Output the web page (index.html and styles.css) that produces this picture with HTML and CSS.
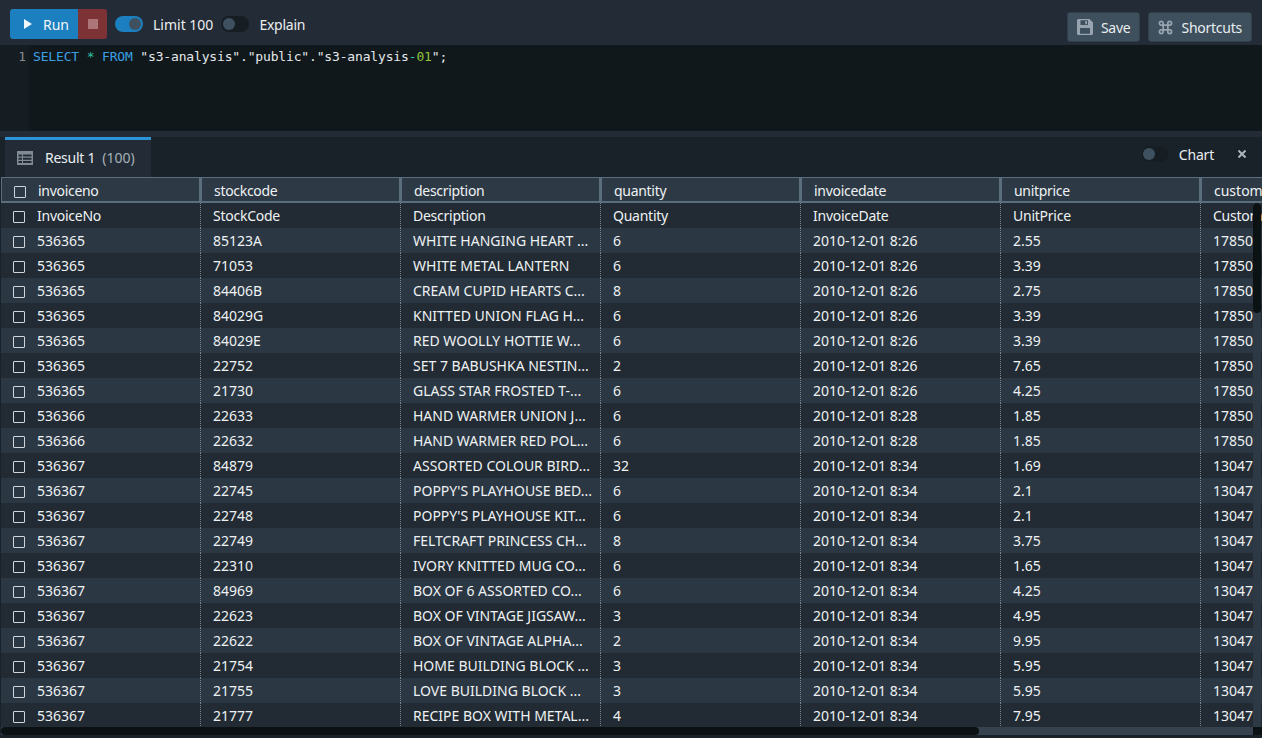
FILE: index.html
```html
<!DOCTYPE html>
<html lang="en">
<head>
<meta charset="utf-8">
<title>Query editor</title>
<link rel="stylesheet" href="styles.css">
</head>
<body>
<div class="app">
  <header class="toolbar">
    <div class="run-group">
      <button class="btn-run"><svg class="ico-play" viewBox="0 0 8 10"><path d="M0 0 8 5 0 10z"/></svg><span>Run</span></button>
      <button class="btn-stop"><span class="stop-square"></span></button>
    </div>
    <span class="toggle on"><span class="knob"></span></span>
    <span class="toggle-label">Limit 100</span>
    <span class="toggle"><span class="knob"></span></span>
    <span class="toggle-label tight">Explain</span>
    <div class="spacer"></div>
    <button class="btn"><svg class="ico" viewBox="0 0 16 16"><path fill-rule="evenodd" d="M0 1.500A1.500 1.500 0 0 1 1.500 0H12.500L16 3.500V14.500A1.500 1.500 0 0 1 14.500 16H1.500A1.500 1.500 0 0 1 0 14.500ZM3.500 1.300V6H11V1.300ZM8.300 2H10V5.300H8.300ZM3 9V14.700H13V9Z"/></svg><span class="tight">Save</span></button>
    <button class="btn"><svg class="ico ico-cmd" viewBox="0 0 16 16"><path fill="none" stroke="currentColor" stroke-width="1.800" d="M5.500 5.500H10.500V10.500H5.500ZM5.500 5.500V3.500A2 2 0 1 0 3.500 5.500H12.500A2 2 0 1 0 10.500 3.500V12.500A2 2 0 1 0 12.500 10.500H3.500A2 2 0 1 0 5.500 12.500V5.500"/></svg><span class="tight">Shortcuts</span></button>
  </header>

  <section class="editor">
    <div class="gutter">1</div>
    <code class="sql"><span class="kw">SELECT</span> <span class="op">*</span> <span class="kw">FROM</span> "s3-analysis"."public"."s3-analysis<span class="op">-</span><span class="num">01</span>";</code>
  </section>

  <div class="divider"></div>

  <section class="results">
    <div class="tabbar">
      <div class="tab">
        <svg class="ico-table" viewBox="0 0 16 14"><path fill-rule="evenodd" d="M0 0H16V14H0ZM1.500 3.500V5.500H5V3.500ZM6 3.500V5.500H14.500V3.500ZM1.500 6.800V8.800H5V6.800ZM6 6.800V8.800H14.500V6.800ZM1.500 10V12H5V10ZM6 10V12H14.500V10Z"/></svg>
        <span class="tight">Result 1</span> <span class="count">(100)</span>
      </div>
      <div class="spacer"></div>
      <span class="toggle chart-toggle"><span class="knob"></span></span>
      <span class="chart-label">Chart</span>
      <svg class="ico-close" viewBox="0 0 8 8"><path d="M.5 .5 7.500 7.500M7.500 .5 .5 7.500"/></svg>
    </div>

    <div class="grid-wrap">
      <div class="grid">
        <div class="row head"><div class="cell"><i class="check"></i>invoiceno</div><div class="cell">stockcode</div><div class="cell">description</div><div class="cell">quantity</div><div class="cell">invoicedate</div><div class="cell">unitprice</div><div class="cell">customerid</div></div>
        <div class="row labels"><div class="cell"><i class="check"></i>InvoiceNo</div><div class="cell">StockCode</div><div class="cell">Description</div><div class="cell">Quantity</div><div class="cell">InvoiceDate</div><div class="cell">UnitPrice</div><div class="cell">CustomerID</div></div>
        <div class="row alt"><div class="cell"><i class="check"></i>536365</div><div class="cell">85123A</div><div class="cell">WHITE HANGING HEART ...</div><div class="cell">6</div><div class="cell">2010-12-01 8:26</div><div class="cell">2.55</div><div class="cell">17850</div></div>
        <div class="row"><div class="cell"><i class="check"></i>536365</div><div class="cell">71053</div><div class="cell">WHITE METAL LANTERN</div><div class="cell">6</div><div class="cell">2010-12-01 8:26</div><div class="cell">3.39</div><div class="cell">17850</div></div>
        <div class="row alt"><div class="cell"><i class="check"></i>536365</div><div class="cell">84406B</div><div class="cell">CREAM CUPID HEARTS C...</div><div class="cell">8</div><div class="cell">2010-12-01 8:26</div><div class="cell">2.75</div><div class="cell">17850</div></div>
        <div class="row"><div class="cell"><i class="check"></i>536365</div><div class="cell">84029G</div><div class="cell">KNITTED UNION FLAG H...</div><div class="cell">6</div><div class="cell">2010-12-01 8:26</div><div class="cell">3.39</div><div class="cell">17850</div></div>
        <div class="row alt"><div class="cell"><i class="check"></i>536365</div><div class="cell">84029E</div><div class="cell">RED WOOLLY HOTTIE W...</div><div class="cell">6</div><div class="cell">2010-12-01 8:26</div><div class="cell">3.39</div><div class="cell">17850</div></div>
        <div class="row"><div class="cell"><i class="check"></i>536365</div><div class="cell">22752</div><div class="cell">SET 7 BABUSHKA NESTIN...</div><div class="cell">2</div><div class="cell">2010-12-01 8:26</div><div class="cell">7.65</div><div class="cell">17850</div></div>
        <div class="row alt"><div class="cell"><i class="check"></i>536365</div><div class="cell">21730</div><div class="cell">GLASS STAR FROSTED T-...</div><div class="cell">6</div><div class="cell">2010-12-01 8:26</div><div class="cell">4.25</div><div class="cell">17850</div></div>
        <div class="row"><div class="cell"><i class="check"></i>536366</div><div class="cell">22633</div><div class="cell">HAND WARMER UNION J...</div><div class="cell">6</div><div class="cell">2010-12-01 8:28</div><div class="cell">1.85</div><div class="cell">17850</div></div>
        <div class="row alt"><div class="cell"><i class="check"></i>536366</div><div class="cell">22632</div><div class="cell">HAND WARMER RED POL...</div><div class="cell">6</div><div class="cell">2010-12-01 8:28</div><div class="cell">1.85</div><div class="cell">17850</div></div>
        <div class="row"><div class="cell"><i class="check"></i>536367</div><div class="cell">84879</div><div class="cell">ASSORTED COLOUR BIRD...</div><div class="cell">32</div><div class="cell">2010-12-01 8:34</div><div class="cell">1.69</div><div class="cell">13047</div></div>
        <div class="row alt"><div class="cell"><i class="check"></i>536367</div><div class="cell">22745</div><div class="cell">POPPY'S PLAYHOUSE BED...</div><div class="cell">6</div><div class="cell">2010-12-01 8:34</div><div class="cell">2.1</div><div class="cell">13047</div></div>
        <div class="row"><div class="cell"><i class="check"></i>536367</div><div class="cell">22748</div><div class="cell">POPPY'S PLAYHOUSE KIT...</div><div class="cell">6</div><div class="cell">2010-12-01 8:34</div><div class="cell">2.1</div><div class="cell">13047</div></div>
        <div class="row alt"><div class="cell"><i class="check"></i>536367</div><div class="cell">22749</div><div class="cell">FELTCRAFT PRINCESS CH...</div><div class="cell">8</div><div class="cell">2010-12-01 8:34</div><div class="cell">3.75</div><div class="cell">13047</div></div>
        <div class="row"><div class="cell"><i class="check"></i>536367</div><div class="cell">22310</div><div class="cell">IVORY KNITTED MUG CO...</div><div class="cell">6</div><div class="cell">2010-12-01 8:34</div><div class="cell">1.65</div><div class="cell">13047</div></div>
        <div class="row alt"><div class="cell"><i class="check"></i>536367</div><div class="cell">84969</div><div class="cell">BOX OF 6 ASSORTED CO...</div><div class="cell">6</div><div class="cell">2010-12-01 8:34</div><div class="cell">4.25</div><div class="cell">13047</div></div>
        <div class="row"><div class="cell"><i class="check"></i>536367</div><div class="cell">22623</div><div class="cell">BOX OF VINTAGE JIGSAW...</div><div class="cell">3</div><div class="cell">2010-12-01 8:34</div><div class="cell">4.95</div><div class="cell">13047</div></div>
        <div class="row alt"><div class="cell"><i class="check"></i>536367</div><div class="cell">22622</div><div class="cell">BOX OF VINTAGE ALPHA...</div><div class="cell">2</div><div class="cell">2010-12-01 8:34</div><div class="cell">9.95</div><div class="cell">13047</div></div>
        <div class="row"><div class="cell"><i class="check"></i>536367</div><div class="cell">21754</div><div class="cell">HOME BUILDING BLOCK ...</div><div class="cell">3</div><div class="cell">2010-12-01 8:34</div><div class="cell">5.95</div><div class="cell">13047</div></div>
        <div class="row alt"><div class="cell"><i class="check"></i>536367</div><div class="cell">21755</div><div class="cell">LOVE BUILDING BLOCK ...</div><div class="cell">3</div><div class="cell">2010-12-01 8:34</div><div class="cell">5.95</div><div class="cell">13047</div></div>
        <div class="row"><div class="cell"><i class="check"></i>536367</div><div class="cell">21777</div><div class="cell">RECIPE BOX WITH METAL...</div><div class="cell">4</div><div class="cell">2010-12-01 8:34</div><div class="cell">7.95</div><div class="cell">13047</div></div>
      </div>
      <div class="vbar"><div class="vthumb"></div></div>
      <div class="hbar"><div class="hthumb"></div></div>
      <div class="corner"></div>
    </div>
  </section>
</div>
</body>
</html>
```
FILE: styles.css
```css
* { box-sizing: border-box; }
html, body { margin: 0; height: 100%; }
body {
  background: #1a2229;
  color: #eaeef1;
  font-family: "Noto Sans", "Open Sans", sans-serif;
  font-size: 14px;
  overflow: hidden;
}
button { font: inherit; border: 0; padding: 0; color: inherit; }
.app { width: 1262px; height: 738px; display: flex; flex-direction: column; overflow: hidden; }
.spacer { flex: 1; }
.tight { letter-spacing: -.25px; }

.toolbar {
  height: 45px;
  background: #232c36;
  display: flex;
  align-items: center;
  padding: 3px 10px 0 10px;
  flex: none;
}
.run-group { display: flex; height: 30px; margin-right: 8px; }
.btn-run {
  width: 68px;
  background: #1c80c0;
  border-radius: 3px 0 0 3px;
  display: flex;
  align-items: center;
  padding-left: 14px;
  gap: 11px;
  color: #f2f6f8;
}
.ico-play { width: 8px; height: 10px; fill: #f2f6f8; }
.btn-stop {
  width: 29px;
  background: #7d3236;
  border-radius: 0 3px 3px 0;
  display: flex;
  align-items: center;
  justify-content: center;
}
.stop-square { width: 10px; height: 10px; background: #ac7578; display: block; }
.toggle {
  width: 28px;
  height: 16px;
  border-radius: 8px;
  background: #161d23;
  display: flex;
  align-items: center;
  padding-left: 2px;
  flex: none;
}
.toggle .knob { width: 12px; height: 12px; border-radius: 50%; background: #3f5160; display: block; }
.toggle.on { background: #1c80c0; padding-left: 14px; }
.toggle-label { margin: 0 8px 0 10px; white-space: nowrap; }
.btn {
  height: 30px;
  background: #3e4f5d;
  border: 1px solid #323f4b;
  border-radius: 3px;
  display: flex;
  align-items: center;
  gap: 8px;
  padding: 0 9px;
  margin-left: 8px;
  margin-top: 6px;
  color: #e8edf0;
}
.ico { width: 16px; height: 16px; fill: #98a5b0; color: #98a5b0; flex: none; }
.ico-cmd { width: 15px; height: 15px; }

.editor {
  height: 86px;
  background: #11181c;
  display: flex;
  flex: none;
  font-family: "DejaVu Sans Mono", monospace;
  font-size: 13px;
  line-height: 23px;
}
.gutter { width: 29px; background: #151c22; color: #848b91; text-align: right; padding-right: 3px; flex: none; }
.sql { font: inherit; color: #e4e8eb; padding-left: 4px; white-space: pre; letter-spacing: -.16px; }
.kw { color: #3aa0e4; }
.op { color: #2fc0a8; }
.num { color: #8fc43c; }

.divider { height: 6px; background: #232c36; flex: none; }

.results { flex: 1; display: flex; flex-direction: column; min-height: 0; }
.tabbar { height: 40px; display: flex; align-items: center; padding-right: 16px; flex: none; background: #1a2229; }
.tab {
  margin-left: 5px;
  width: 146px;
  height: 40px;
  background: #232c36;
  border-top: 3px solid #2a94d6;
  display: flex;
  align-items: center;
  padding: 0 0 2px 12px;
  gap: 5px;
  white-space: pre;
}
.ico-table { width: 16px; height: 14px; fill: #7f8a94; margin-right: 7px; }
.count { color: #a6b0b8; margin-left: 2px; }
.chart-toggle { width: 26px; padding-left: 1px; margin-right: 11px; margin-top: -6px; }
.chart-label { margin-right: 24px; margin-top: -6px; letter-spacing: -.2px; }
.ico-close { width: 8px; height: 8px; stroke: #aeb6bd; stroke-width: 2; fill: none; margin-top: -6px; }

.grid-wrap { flex: 1; position: relative; overflow: hidden; padding-left: 1px; min-height: 0; }
.grid { display: flex; flex-direction: column; width: 1400px; }
.row { display: flex; height: 25px; background: #222b33; flex: none; }
.row.alt { background: #2b3743; }
.cell {
  width: 200px;
  flex: none;
  padding-left: 12px;
  line-height: 25px;
  white-space: nowrap;
  overflow: hidden;
  border-right: 1px dotted #7b858e;
  color: #eef2f4;
}
.cell .check { margin-right: 12px; }
.check {
  display: inline-block;
  width: 12px;
  height: 12px;
  border: 1.500px solid #cfd5da;
  border-radius: 1px;
  vertical-align: -2px;
}
.labels .cell { letter-spacing: -.25px; }
.row.head { height: 26px; background: #2d3944; border-top: 1px solid #5a6e7e; border-bottom: 2px solid #5a6e7e; }
.row.head .cell { border-right: 3px solid #5a6e7e; padding-left: 12px; line-height: 25px; letter-spacing: -.3px; }
.row.head .cell:first-child { border-left: 1px solid #5a6e7e; width: 201px; padding-left: 12px; }
.row.head .cell:last-child { letter-spacing: 0; }

.vbar { position: absolute; right: 1px; top: 26px; bottom: 10px; width: 8px; background: #2d3944; }
.vthumb { height: 110px; background: #0c1114; border-radius: 4px; }
.hbar { position: absolute; left: 1px; right: 9px; bottom: 3px; height: 8px; background: #36434f; }
.hthumb { width: 978px; height: 8px; background: #0c1114; border-radius: 4px; }
.corner { position: absolute; right: 0; bottom: 3px; width: 9px; height: 8px; background: #0c1114; }
```
